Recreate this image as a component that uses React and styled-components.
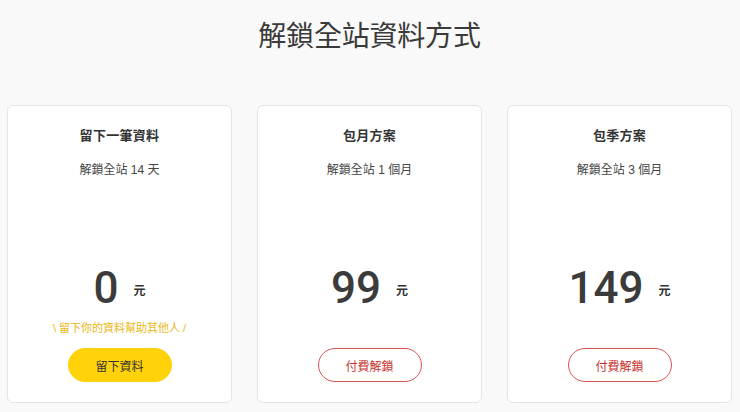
import styled, { createGlobalStyle } from "styled-components";

const GlobalStyle = createGlobalStyle`
  * { box-sizing: border-box; }
  body {
    margin: 0;
    background: #f9f9f9;
    font-family: "Liberation Sans", "Noto Sans CJK TC", sans-serif;
    color: #333;
  }
`;

const Page = styled.div`
  width: 740px;
  height: 412px;
  padding: 17px 8px 0 7px;
  overflow: hidden;
`;

const Heading = styled.h1`
  margin: 0;
  text-align: center;
  font-size: 28px;
  line-height: 40px;
  font-weight: 400;
  color: #3a3a3a;
  letter-spacing: -0.2px;
`;

const Cards = styled.div`
  display: grid;
  grid-template-columns: repeat(3, 225px);
  gap: 25px;
  margin-top: 48px;
`;

const Card = styled.div`
  display: flex;
  flex-direction: column;
  align-items: center;
  height: 298px;
  background: #fff;
  border: 1px solid #e4e4e4;
  border-radius: 6px;
  padding: 20px 0 20px;
`;

const Title = styled.div`
  font-size: 13px;
  line-height: 20px;
  font-weight: 700;
  letter-spacing: 0.3px;
  color: #333;
`;

const Subtitle = styled.div`
  margin-top: 14px;
  font-size: 12px;
  line-height: 20px;
  color: #444;
`;

const Price = styled.div`
  margin-top: auto;
  display: flex;
  align-items: center;
  height: 48px;
`;

const Amount = styled.span`
  font-family: Roboto, "Liberation Sans", sans-serif;
  font-size: 44px;
  font-weight: 500;
  color: #3b3b3b;
  line-height: 48px;
`;

const Unit = styled.span`
  margin-left: 15px;
  font-size: 12px;
  font-weight: 700;
  color: #333;
  margin-top: 2px;
`;

const Note = styled.div`
  margin-top: 7px;
  height: 18px;
  font-size: 11px;
  line-height: 18px;
  color: #e9b713;
  visibility: ${({ $hidden }) => ($hidden ? "hidden" : "visible")};
`;

const Button = styled.button`
  margin-top: 11px;
  width: 104px;
  height: 34px;
  border-radius: 17px;
  font-family: inherit;
  font-size: 12px;
  cursor: pointer;
  border: 1px solid ${({ $primary }) => ($primary ? "#ffd20a" : "#d9534f")};
  background: ${({ $primary }) => ($primary ? "#ffd20a" : "#fff")};
  color: ${({ $primary }) => ($primary ? "#333" : "#c9302c")};
`;

const plans = [
  {
    title: "留下一筆資料",
    desc: "解鎖全站 14 天",
    price: "0",
    note: "\\ 留下你的資料幫助其他人 /",
    action: "留下資料",
    primary: true,
  },
  { title: "包月方案", desc: "解鎖全站 1 個月", price: "99", action: "付費解鎖" },
  { title: "包季方案", desc: "解鎖全站 3 個月", price: "149", action: "付費解鎖" },
];

export default function App() {
  return (
    <Page>
      <GlobalStyle />
      <Heading>解鎖全站資料方式</Heading>
      <Cards>
        {plans.map((p) => (
          <Card key={p.title}>
            <Title>{p.title}</Title>
            <Subtitle>{p.desc}</Subtitle>
            <Price>
              <Amount>{p.price}</Amount>
              <Unit>元</Unit>
            </Price>
            <Note $hidden={!p.note}>{p.note || "."}</Note>
            <Button $primary={p.primary}>{p.action}</Button>
          </Card>
        ))}
      </Cards>
    </Page>
  );
}
